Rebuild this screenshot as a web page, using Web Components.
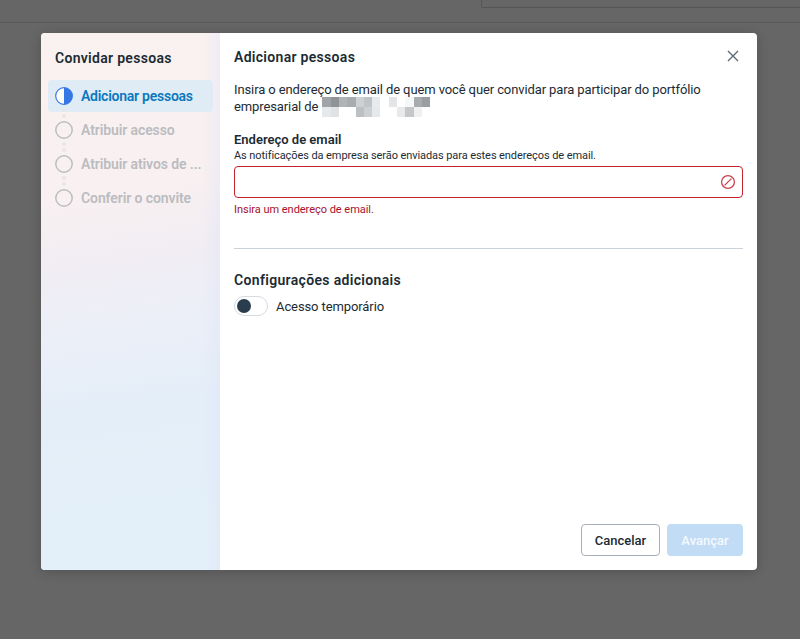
<!DOCTYPE html>
<html lang="pt">
<head>
<meta charset="utf-8">
<title>Convidar pessoas</title>
<style>
  html, body { margin: 0; height: 100%; }
  body { font-family: "Roboto", "Liberation Sans", sans-serif; color: #1c2b33; background: #666; overflow: hidden; }
</style>
</head>
<body>
<page-shade>
  <invite-dialog>
    <step-item slot="steps" state="active" label="Adicionar pessoas"></step-item>
    <step-item slot="steps" label="Atribuir acesso"></step-item>
    <step-item slot="steps" label="Atribuir ativos de ..."></step-item>
    <step-item slot="steps" label="Conferir o convite"></step-item>

    <p class="intro">Insira o endereço de email de quem você quer convidar para participar do portfólio empresarial de <blur-block></blur-block></p>
    <email-field></email-field>
    <hr>
    <h3>Configurações adicionais</h3>
    <toggle-row>Acesso temporário</toggle-row>
  </invite-dialog>
</page-shade>

<script>
class PageShade extends HTMLElement {
  constructor() {
    super();
    this.attachShadow({ mode: "open" }).innerHTML = `
    <style>
      :host { display: flex; flex-direction: column; height: 100vh; background: #666; position: relative; }
      .top { height: 22px; border-bottom: 1px solid #5a5a5a; flex: none; position: relative; }
      .search { position: absolute; left: 481px; right: 0; top: -1px; height: 8px; border: 1px solid #555; border-right: 0; border-bottom-left-radius: 2px; border-top: 0; }
      .wrap { padding: 10px 43px 0 41px; }
    </style>
    <div class="top"><div class="search"></div></div>
    <div class="wrap"><slot></slot></div>`;
  }
}

class InviteDialog extends HTMLElement {
  constructor() {
    super();
    this.attachShadow({ mode: "open" }).innerHTML = `
    <style>
      :host { display: flex; height: 537px; border-radius: 4px; overflow: hidden; background: #fff;
        box-shadow: 0 2px 12px rgba(0,0,0,.2); }
      .side { width: 179px; flex: none; box-sizing: border-box; padding: 16px 7px 0;
        background:
          linear-gradient(to right, rgba(222,228,246,0) 90%, rgba(222,228,246,.4) 100%),
          linear-gradient(172deg, #faf2f0 0%, #f8f0f1 30%, #f1edf3 42%, #eceff8 54%, #e4eef8 68%, #e3f0f9 100%); }
      .side h2 { margin: 0 0 13px 7px; font-size: 14px; line-height: 18px; font-weight: 600; letter-spacing: .3px; color: #1c2b33; }
      .steps { display: flex; flex-direction: column; gap: 2px; }
      .main { flex: 1; box-sizing: border-box; padding: 15px 14px 14px; display: flex; flex-direction: column; position: relative; min-width: 0; }
      .main h1 { margin: 0 0 15px; font-size: 14px; line-height: 18px; font-weight: 600; letter-spacing: .3px; color: #1c2b33; }
      .close { position: absolute; top: 16px; right: 17px; width: 14px; height: 14px; }
      .body { flex: 1; }
      .foot { display: flex; justify-content: flex-end; gap: 7px; }
      ::slotted(p.intro) { margin: 0 0 16px; font-size: 13px; line-height: 17px; letter-spacing: -.11px; color: #1c2b33; }
      ::slotted(hr) { border: 0; height: 1px; background: #cbd2d9; margin: 31px 0 22px; }
      ::slotted(h3) { margin: 0 0 7px; font-size: 14px; line-height: 18px; font-weight: 600; letter-spacing: .33px; color: #1c2b33; }
      button { font: 500 13px/1 "Roboto", "Liberation Sans", sans-serif; height: 32px; border-radius: 4px; padding: 0; cursor: pointer; }
      .cancel { width: 79px; background: #fff; border: 1px solid #a7afb8; color: #1c2b33; }
      .next { width: 76px; background: #c2dcf5; border: 0; color: #f4f9fe; }
    </style>
    <aside class="side">
      <h2>Convidar pessoas</h2>
      <div class="steps"><slot name="steps"></slot></div>
    </aside>
    <section class="main">
      <h1>Adicionar pessoas</h1>
      <svg class="close" viewBox="0 0 14 14" fill="none" stroke="#5d6b75" stroke-width="1.4"><path d="M2 2l10 10M12 2L2 12"/></svg>
      <div class="body"><slot></slot></div>
      <div class="foot">
        <button class="cancel">Cancelar</button>
        <button class="next">Avançar</button>
      </div>
    </section>`;
  }
}

class StepItem extends HTMLElement {
  constructor() {
    super();
    const active = this.getAttribute("state") === "active";
    const icon = active
      ? `<svg viewBox="0 0 18 18" width="18" height="18"><circle cx="9" cy="9" r="8.3" fill="#fff" stroke="#3578e5" stroke-width="1.2"/><path d="M9 .4a8.6 8.6 0 0 1 0 17.2z" fill="#3578e5"/></svg>`
      : `<svg viewBox="0 0 18 18" width="18" height="18"><circle cx="9" cy="9" r="8.2" fill="none" stroke="#bcbec2" stroke-width="1.5"/></svg>`;
    this.attachShadow({ mode: "open" }).innerHTML = `
    <style>
      :host { display: block; }
      .row { display: flex; align-items: center; gap: 8px; height: 32px; padding: 0 7px; border-radius: 4px; position: relative; }
      .row.on { background: #dfecf6; }
      .label { font-size: 14px; font-weight: 600; white-space: nowrap; letter-spacing: -.1px; color: #bbbcc0; }
      .on .label { color: #0a78be; letter-spacing: -.25px; }
      svg { flex: none; display: block; }
      .dots { position: absolute; left: 14px; top: -6px; width: 4px; height: 4px; border-radius: 2px; background: #e8e6e8; box-shadow: 0 6px 0 #e8e6e8; display: none; }
      :host(:not([state="active"])) .dots { display: block; }
    </style>
    <div class="row ${active ? "on" : ""}"><span class="dots"></span>${icon}<span class="label">${this.getAttribute("label")}</span></div>`;
  }
}

class BlurBlock extends HTMLElement {
  constructor() {
    super();
    // mosaic of the hidden company name, top row then bottom row
    const cells = ["#a0a4a6","#8f9395","#b0b4b6","#a8acae","#cdd1d4","#c0c4c6","#e8ebee","#fff","#e4e5e7","#fff","#f6f7f8","#a8acae","#9a9ea0",
                   "#e6e9ec","#e0e3e6","#fff","#fff","#bcc0c2","#ccd0d2","#e6e9ec","#fff","#fff","#e8e9ea","#c6c7c8","#f0f0f0","#fff"];
    this.attachShadow({ mode: "open" }).innerHTML = `
    <style>
      :host { display: inline-grid; grid-template-columns: repeat(13, 8.3px); grid-auto-rows: 10px; vertical-align: 4px; margin: -6px 0 -6px 1px; }
    </style>
    ${cells.map(c => `<i style="background:${c}"></i>`).join("")}`;
  }
}

class EmailField extends HTMLElement {
  constructor() {
    super();
    this.attachShadow({ mode: "open" }).innerHTML = `
    <style>
      :host { display: block; }
      label { display: block; font-size: 13px; line-height: 18px; font-weight: 600; color: #1c2b33; }
      small { display: block; font-size: 11px; line-height: 14px; margin-bottom: 3px; letter-spacing: -.08px; color: #1c2b33; }
      .box { height: 32px; box-sizing: border-box; border: 1px solid #c4222e; border-radius: 4px; display: flex; align-items: center; justify-content: flex-end; padding-right: 6px; }
      .err { font-size: 11px; line-height: 14px; margin-top: 5px; letter-spacing: -.03px; color: #a8102b; }
      svg { display: block; }
    </style>
    <label>Endereço de email</label>
    <small>As notificações da empresa serão enviadas para estes endereços de email.</small>
    <div class="box">
      <svg width="16" height="16" viewBox="0 0 16 16" fill="none" stroke="#c8404c" stroke-width="1.3"><circle cx="8" cy="8" r="6.4"/><path d="M4.6 11.4l6.8-6.8"/></svg>
    </div>
    <div class="err">Insira um endereço de email.</div>`;
  }
}

class ToggleRow extends HTMLElement {
  constructor() {
    super();
    this.attachShadow({ mode: "open" }).innerHTML = `
    <style>
      :host { display: flex; align-items: center; gap: 8px; font-size: 13px; letter-spacing: -.1px; color: #1c2b33; }
      .track { width: 34px; height: 20px; box-sizing: border-box; border: 1px solid #d5dbe1; border-radius: 10px; background: #fff; padding: 2px; }
      .knob { width: 14px; height: 14px; border-radius: 50%; background: #2a3d4e; }
    </style>
    <div class="track"><div class="knob"></div></div>
    <span><slot></slot></span>`;
  }
}

customElements.define("page-shade", PageShade);
customElements.define("invite-dialog", InviteDialog);
customElements.define("step-item", StepItem);
customElements.define("blur-block", BlurBlock);
customElements.define("email-field", EmailField);
customElements.define("toggle-row", ToggleRow);
</script>
</body>
</html>
